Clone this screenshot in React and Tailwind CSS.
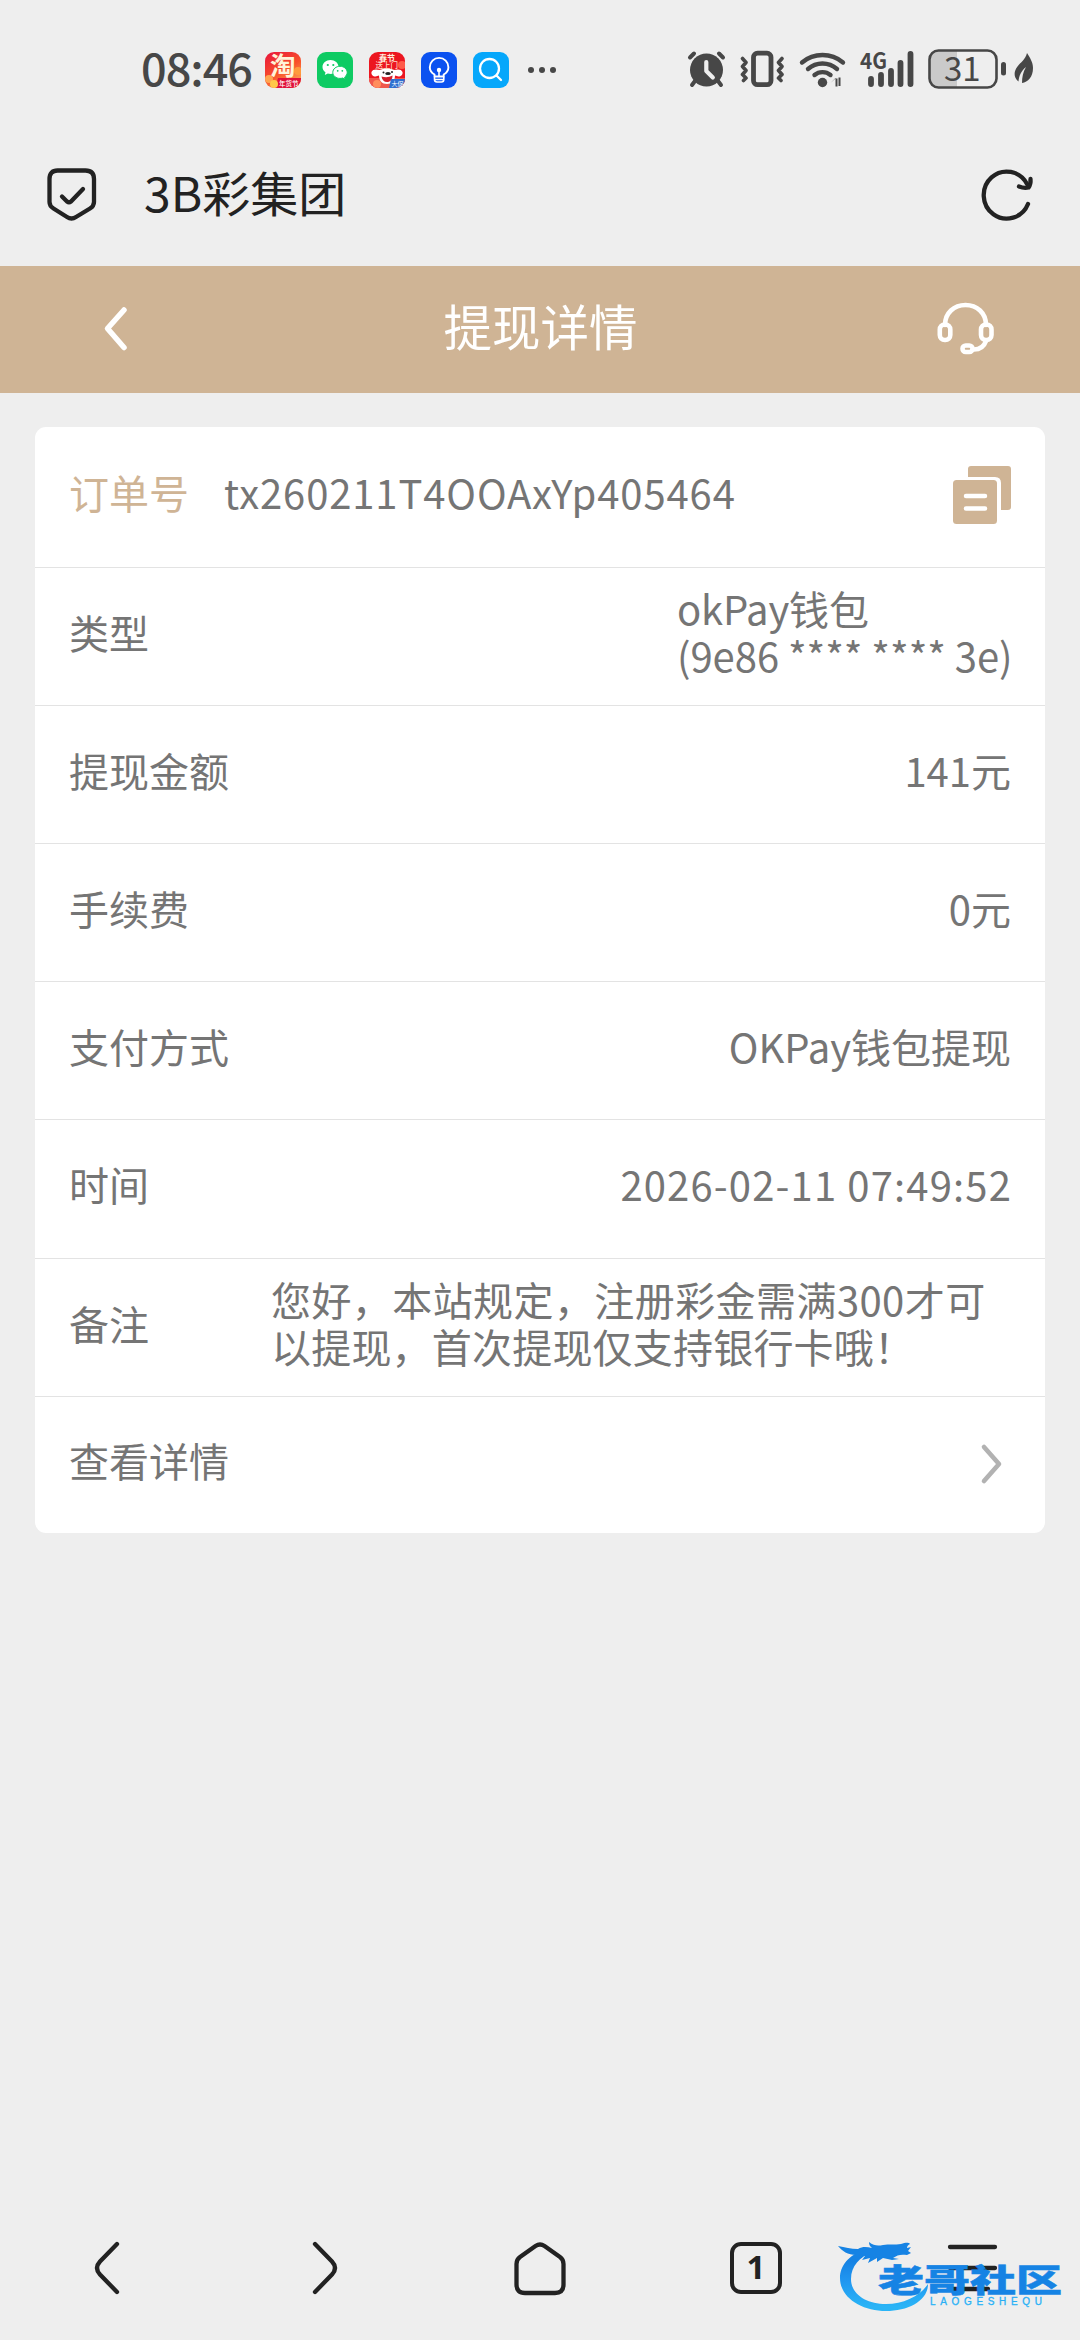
import React from "react";

const rows = [
  {
    label: "类型",
    value: [
      { text: "okPay钱包", className: "tracking-[-0.2px]" },
      { text: "(9e86 **** **** 3e)", className: "tracking-[-0.05px]" },
    ],
    className: "w-[334px]",
  },
  { label: "提现金额", value: [{ text: "141元" }] },
  { label: "手续费", value: [{ text: "0元" }] },
  { label: "支付方式", value: [{ text: "OKPay钱包提现" }] },
  { label: "时间", value: [{ text: "2026-02-11 07:49:52", className: "-mr-[1px] tracking-[1.15px]" }] },
  {
    label: "备注",
    value: [
      { text: "您好，本站规定，注册彩金需满300才可", className: "tracking-[0.42px]" },
      { text: "以提现，首次提现仅支持银行卡哦！", className: "tracking-[0.2px]" },
    ],
    className: "w-[740px]",
  },
];

function AppIcons() {
  return (
    <div className="ml-[13px] flex gap-[16px]">
      <svg className="overflow-visible" width="36" height="36" viewBox="0 0 36 36">
        <defs>
          <linearGradient id="tao" x1="0" y1="0" x2="0.6" y2="1">
            <stop offset="0" stopColor="#e8143c" />
            <stop offset="0.6" stopColor="#f8502a" />
            <stop offset="1" stopColor="#fda050" />
          </linearGradient>
          <clipPath id="iconClip">
            <rect width="36" height="36" rx="9" />
          </clipPath>
        </defs>
        <g clipPath="url(#iconClip)">
          <rect width="36" height="36" fill="url(#tao)" />
          <circle cx="33" cy="19" r="4" fill="#ff9a3c" />
          <circle cx="4" cy="27" r="4" fill="#ffa550" />
          <path d="M13 26h23v10H10z" fill="#e0123a" />
          <circle cx="9" cy="32" r="4" fill="#ffc84a" />
        </g>
        <text x="5" y="23" fontSize="25.500" fontWeight="700" fill="#fff3d8">淘</text>
        <text x="14" y="34" fontSize="6.500" fontWeight="500" fill="#fff">年货节</text>
      </svg>
      <svg width="36" height="36" viewBox="0 0 36 36">
        <rect width="36" height="36" rx="9" fill="#0ecb63" />
        <path d="M13.500 8C9 8 5.500 11 5.500 15c0 2.200 1.100 4 3 5.300L7.800 23l3-1.500c1 .3 1.800.4 2.800.4C18 21.800 21.500 19 21.500 15s-3.500-7-8-7z" fill="#fff" />
        <path d="M23 14.300c4 0 7.200 2.700 7.200 6.100 0 1.900-1 3.500-2.500 4.600l.5 2.300-2.500-1.300c-.9.300-1.700.4-2.700.4-4 0-7.200-2.600-7.200-6s3.200-6.100 7.200-6.100z" fill="#fff" stroke="#0ecb63" strokeWidth="1" />
        <g fill="#0ecb63">
          <circle cx="10.800" cy="13" r="1.100" />
          <circle cx="16.300" cy="13" r="1.100" />
          <circle cx="20.700" cy="18.800" r="0.900" />
          <circle cx="25.300" cy="18.800" r="0.900" />
        </g>
      </svg>
      <svg className="overflow-visible" width="36" height="36" viewBox="0 0 36 36">
        <g clipPath="url(#iconClip)">
          <rect width="36" height="36" fill="#ec1620" />
          <circle cx="33" cy="13" r="4" fill="#ff5a4a" />
          <path d="M0 26h36v10H0z" fill="#f0584c" />
          <path d="M2.500 20c1-3 5-3 8-2q3-1.500 7.500-1.500t7.500 1.500c3-1 7-1 8 2 .6 2.500-1.500 4.500-4 4.500l-3.500-1c0 5-3 8.500-8 8.500s-8-3.500-8-8.500l-3.500 1c-2.500 0-4.600-2-4-4.500z" fill="#fff" />
          <ellipse cx="19" cy="21.500" rx="2.800" ry="1.500" fill="#222" />
          <circle cx="14.500" cy="20.500" r="1" fill="#222" />
          <circle cx="23" cy="20" r="1" fill="#222" />
          <path d="M12.500 24.500q6 2 11-1c0 4-2 6.500-5.500 6.500-3 0-5-2-5.500-5.500z" fill="#d4202c" />
          <circle cx="8" cy="32" r="4" fill="#ff8d5c" />
          <path d="M22 27h14v9H20z" fill="#2f6fd0" />
        </g>
        <text x="10" y="8.500" fontSize="8" fontWeight="700" fill="#ffeede">春节</text>
        <text x="6.500" y="16" fontSize="7.500" fontWeight="500" fill="#ffd9c8">送上门</text>
        <text x="22.500" y="34" fontSize="6" fill="#fff">大促</text>
      </svg>
      <svg width="36" height="36" viewBox="0 0 36 36" fill="none" stroke="#fff" strokeLinecap="round" strokeLinejoin="round">
        <rect width="36" height="36" rx="9" fill="#0b51f0" stroke="none" />
        <path d="M13.500 24.500v-2c-3-1.800-4.700-4.300-4.700-7.300a9.300 9.300 0 0 1 18.600 0c0 3-1.700 5.500-4.700 7.300v2z" strokeWidth="1.900" />
        <path d="M13.500 25v2.500q0 2.500 2.500 2.500h4.500q2.300 0 2.300-2.500V25M14 27.500h8.500M18 19.500v5" strokeWidth="1.600" />
        <circle cx="18" cy="18" r="2.200" fill="#fff" stroke="none" />
      </svg>
      <svg width="36" height="36" viewBox="0 0 36 36" fill="none" stroke="#fff" strokeWidth="2.300" strokeLinecap="round">
        <rect width="36" height="36" rx="9" fill="#06a7fb" stroke="none" />
        <circle cx="16.500" cy="16.500" r="9.500" />
        <path d="M23.500 23.500l4.500 4.500" />
      </svg>
    </div>
  );
}

function StatusIcons() {
  return (
    <svg className="overflow-visible" width="370" height="48" viewBox="679 46 370 48" fill="none" stroke="#474747" strokeLinecap="round" strokeLinejoin="round">
      {/* alarm */}
      <circle cx="705.500" cy="70" r="16.500" fill="#474747" stroke="none" />
      <path d="M689 57.500l4-4M722 57.500l-4-4" strokeWidth="4" />
      <path d="M694 81l-3 4M717 81l3 4" strokeWidth="4" />
      <path d="M705.300 62v9l6.500 6.500" stroke="#eee" strokeWidth="4.200" />
      {/* vibrate */}
      <rect x="752.500" y="53.200" width="17.500" height="31.500" rx="4" strokeWidth="4.800" />
      <path d="M741.500 58.500l3.500 4-3.500 4 3.500 4-3.500 4 3.500 3.500-2.500 2.500M781 58.500l-3.500 4 3.500 4-3.500 4 3.500 4-3.500 3.500 2.500 2.500" strokeWidth="3.600" />
      {/* wifi */}
      <path d="M801 62.500a32 32 0 0 1 41 0M807 69a22 22 0 0 1 29 0M813.500 75a12.500 12.500 0 0 1 16 0" strokeWidth="4.400" />
      <circle cx="821.500" cy="82.500" r="4.700" fill="#474747" stroke="none" />
      <path d="M829.500 83l5-5v8.500h2V78.500h-2M844.500 81l-5 5v-8.500h-2V86h2z" fill="#474747" stroke="none" />
      {/* signal */}
      <text x="859" y="69" fontSize="22" fontWeight="700" fill="#474747" stroke="none" textLength="27" lengthAdjust="spacingAndGlyphs">4G</text>
      <path d="M870 79v5M880 75v9M890 71v13M899.500 63v21M909.500 54v30" strokeWidth="5.800" />
      {/* battery */}
      <path d="M938 51h18v37h-18q-9-1-9-10V61q0-10 9-10z" fill="#cacaca" stroke="none" />
      <rect x="928.500" y="50.500" width="67" height="37" rx="9" strokeWidth="2.600" />
      <path d="M1002.500 64.500v8.500" strokeWidth="5" />
      <text x="943" y="81" fontSize="33" fill="#474747" stroke="none">31</text>
      {/* leaf */}
      <path d="M1026 53c3 5 6 9 6 15 0 9-5 14-11 15 0-6 1-11 4-16-5 4-7 9-7.500 14.500-5-4-5-10-1-15 3-4 8-7 9.500-13.500z" fill="#474747" stroke="none" />
    </svg>
  );
}

function Watermark() {
  return (
    <svg className="absolute left-[830px] top-[2230px]" width="240" height="90" viewBox="0 0 240 90">
      <defs>
        <linearGradient id="water" x1="0" y1="0" x2="0" y2="90" gradientUnits="userSpaceOnUse">
          <stop offset="0.350" stopColor="#1683e4" />
          <stop offset="0.550" stopColor="#2095f0" />
          <stop offset="0.850" stopColor="#2ab4f6" />
        </linearGradient>
      </defs>
      <g fill="url(#water)">
        <path d="M36 19C18 25 10 36 10 48c0 20 22 33 46 33 22 0 42-10 42-27-8 12-24 20-42 20-20 0-35-10-35-25 0-13 9-22 21-27z" />
        <path d="M8 16c7 1 13 3 20 3 5-3 9-2 14-1-2-2-3-3-3-6 5 4 9 4 14 3 6-1 12 0 18-1 4-1 7-2 9 0-2 1-3 2-3 4l4-1-3 4 3 2-4 2c-6-1-10 0-14 3l6 1-7 1-9-2-6 4v-4l-9 5 2-5-8 2 3-4-9-1c-8 0-14-4-18-9z" />
        <text fontSize="32" fontWeight="900" textLength="184" lengthAdjust="spacingAndGlyphs" transform="translate(48 61.500)" stroke="url(#water)" strokeWidth="0.500">老哥社区</text>
        <text x="100" y="74.500" fontSize="10" textLength="112" stroke="url(#water)" strokeWidth="0.300" className="font-['Liberation_Sans',sans-serif]">LAOGESHEQU</text>
      </g>
    </svg>
  );
}

export default function App() {
  return (
    <div className="relative flex h-[2340px] w-[1080px] flex-col overflow-hidden bg-[#eeeeee] font-['Noto_Sans_CJK_SC',sans-serif]">
      <div className="flex h-[140px] shrink-0 items-center pl-[141px] pr-[30px] text-[#474747]">
        <span className="w-[111px] pb-[7px] text-[45px] leading-none font-medium tracking-[-1px] whitespace-nowrap">08:46</span>
        <AppIcons />
        <div className="ml-[19px] flex gap-[5px]">
          <i className="size-[6px] rounded-full bg-[#474747]" />
          <i className="size-[6px] rounded-full bg-[#474747]" />
          <i className="size-[6px] rounded-full bg-[#474747]" />
        </div>
        <div className="ml-auto">
          <StatusIcons />
        </div>
      </div>

      <div className="flex h-[126px] shrink-0 items-center pr-[45px] pb-[17px] pl-[45px] text-[#222]">
        <svg width="54" height="56" viewBox="0 0 54 56" fill="none" stroke="#222" strokeWidth="4.300" strokeLinecap="round" strokeLinejoin="round">
          <path d="M12.500 3.500h28q8.500 0 8.500 8.500v23q0 4-4 6.500L31 50q-4.500 3-9 0L8.500 41.500Q4.500 39 4.500 35V12q0-8.500 8-8.500z" />
          <path d="M17 29.500l5 5q2 1.500 4 0L38 22" />
        </svg>
        <span className="ml-[45px] pb-[7px] text-[48px] leading-none">3B彩集团</span>
        <svg className="ml-auto" width="54" height="54" viewBox="0 0 54 54" fill="none" stroke="#222" strokeWidth="4.300" strokeLinecap="round" strokeLinejoin="round">
          <path d="M47 36A23 23.500 0 1 1 46 16" />
          <path d="M38 18.500q5 2 9.500 1 2.500-3 2-8.500" />
        </svg>
      </div>

      <div className="flex h-[127px] shrink-0 items-center justify-between bg-[#cfb495] pr-[83px] pb-[2px] pl-[84px] text-white">
        <svg width="60" height="50" viewBox="0 0 60 50" fill="none" stroke="#fff" strokeWidth="5.500" strokeLinecap="round" strokeLinejoin="round">
          <path d="M40 6L23.500 24.500 40 43.500" />
        </svg>
        <h1 className="pb-[6px] text-[48.500px] leading-none">提现详情</h1>
        <svg width="60" height="56" viewBox="0 0 60 56" fill="none" stroke="#fff" strokeWidth="4.600" strokeLinecap="round">
          <path d="M8 24C8 12 17 4 28.500 4S49 12 49 24" />
          <rect x="2.800" y="23.500" width="10.500" height="15.500" rx="5" />
          <rect x="44" y="23.500" width="10.500" height="15.500" rx="5" />
          <path d="M49 40q-3 8.500-12 8.500" />
          <rect x="25.500" y="44.500" width="10" height="6.500" rx="3.200" />
        </svg>
      </div>

      <div className="mx-[35px] mt-[34px] rounded-[11px] bg-white text-[40px] leading-[47px] text-[#757575]">
        <div className="flex h-[140.600px] items-center border-b border-[#e3e3e3] pr-[34px] pl-[34px]">
          <span className="pb-[8px] text-[#cfb495]">订单号</span>
          <span className="ml-[35px] pb-[8px] tracking-[0.870px]">tx260211T4OOAxYp405464</span>
          <svg className="mb-[3px] ml-auto" width="58" height="60" viewBox="0 0 58 60" fill="#cfb495">
            <path d="M15 12V4q0-3 3-3h37q3 0 3 3v38q0 3-3 3h-7V18q0-6-6-6z" />
            <rect x="0" y="15" width="44" height="44" rx="3.500" />
            <path d="M13 31h19M13 43.500h19" stroke="#fff" strokeWidth="4.500" strokeLinecap="round" />
          </svg>
        </div>
        {rows.map((row) => (
          <div key={row.label} className="flex h-[138.200px] items-center justify-between border-b border-[#e3e3e3] pr-[34px] pb-[8px] pl-[34px]">
            <span>{row.label}</span>
            <div className={row.className}>
              {row.value.map((line) => (
                <p key={line.text} className="whitespace-nowrap">
                  <span className={line.className}>{line.text}</span>
                </p>
              ))}
            </div>
          </div>
        ))}
        <div className="flex h-[136.500px] items-center justify-between pr-[34px] pl-[34px]">
          <span className="pb-[8px]">查看详情</span>
          <svg className="mb-[2px]" width="40" height="44" viewBox="0 0 40 44" fill="none" stroke="#b2b2b2" strokeWidth="4.600" strokeLinecap="round" strokeLinejoin="round">
            <path d="M13 5l15 17-15 17" />
          </svg>
        </div>
      </div>

      <div className="mt-auto grid h-[144px] shrink-0 grid-cols-5 place-items-center">
        <svg width="56" height="56" viewBox="0 0 56 56" fill="none" stroke="#222" strokeWidth="4.300" strokeLinecap="round">
          <path d="M37 4L20 21.500q-6 6.500 0 13L37 52" />
        </svg>
        <svg width="56" height="56" viewBox="0 0 56 56" fill="none" stroke="#222" strokeWidth="4.300" strokeLinecap="round">
          <path d="M19 4l17 17.500q6 6.500 0 13L19 52" />
        </svg>
        <svg width="56" height="56" viewBox="0 0 56 56" fill="none" stroke="#222" strokeWidth="4.300" strokeLinejoin="round">
          <path d="M8 17L23.500 6q4.500-3 9 0L48 17q3.500 2.500 3.500 7v20.500q0 8.500-8.500 8.500H13q-8.500 0-8.500-8.500V24q0-4.500 3.500-7z" />
        </svg>
        <div className="flex size-[52px] items-center justify-center rounded-[11px] border-4 border-[#222] pb-[4px] font-['Noto_Sans',sans-serif] text-[33px] leading-none font-bold text-[#222]">
          1
        </div>
        <svg width="56" height="56" viewBox="0 0 56 56" stroke="#222" strokeWidth="4.300" strokeLinecap="round">
          <path d="M6 7h45M6 28h45M6 49h38" />
        </svg>
      </div>

      <Watermark />
    </div>
  );
}
